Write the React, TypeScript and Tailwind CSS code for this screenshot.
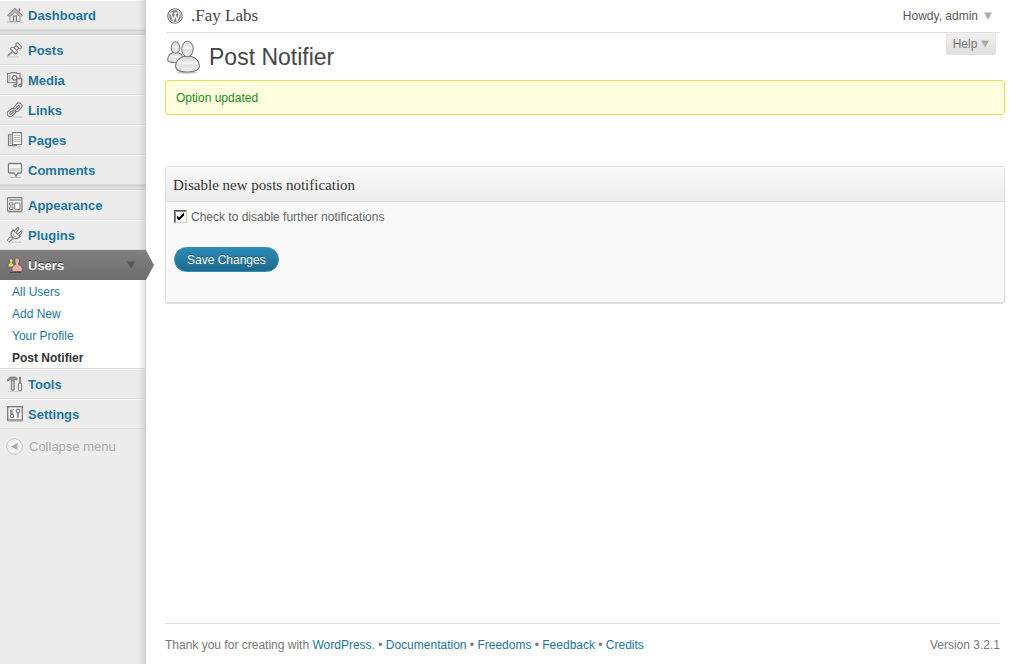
import type { ReactNode } from "react";

function Glyph({ children, className = "h-4 w-4" }: { children: ReactNode; className?: string }) {
  return (
    <svg viewBox="0 0 16 16" className={className} fill="none" stroke="#7c7c7c" strokeWidth="1.1" aria-hidden="true">
      {children}
    </svg>
  );
}

const icons: Record<string, ReactNode> = {
  Dashboard: (
    <Glyph>
      <path d="M.8 9 8 2.300l7.200 6.700" strokeWidth="2.200" stroke="#858585" />
      <path d="M1.500 8.800 8 2.800l6.500 6" strokeWidth=".7" stroke="#f5f5f5" />
      <path d="M12.500 1.500v3" strokeWidth="1.600" />
      <path d="M3 9.500v5h10v-5L8 4.800z" fill="#f2f2f2" stroke="#999" />
      <path d="M6.500 14.500V9h3v5.500" fill="#ddd" stroke="#777" />
      <path d="M0 15.200h16" stroke="#c4c4c4" strokeWidth="1" />
    </Glyph>
  ),
  Posts: (
    <Glyph>
      <path d="M9.300 1.200Q10.500.2 12 1.800l1.600 1.700q1.500 1.500.4 2.500-1 .8-2.200.3L9.700 8.200q1 2-.2 3.300-.8.700-1.700-.2L4 7.500q-.9-.9-.1-1.600 1.300-1.100 3.200-.2l2.100-2.200q-.6-1.300.1-2.300z" fill="#f5f5f5" />
      <path d="M9.200 3.500l2.700 2.800M6.800 5.700l3 2.800" />
      <path d="M5.500 9.500 1 13.800" strokeWidth="1.400" />
      <path d="M0 14.900h12" stroke="#c8c8c8" />
    </Glyph>
  ),
  Media: (
    <Glyph>
      <path d="M.6 2.500V1.500h3l.8-.9h4.800l.8.9h3v4M.6 2v8.500h9" fill="none" strokeWidth="1.200" />
      <path d="M2.800 3v6" stroke="#aaa" />
      <circle cx="7.500" cy="5.800" r="2.300" fill="#fff" strokeWidth="1.300" />
      <path d="M9.700 13V6.500h5V13" strokeWidth="1.400" />
      <ellipse cx="8.200" cy="13.500" rx="1.500" ry="1.400" fill="#ddd" />
      <ellipse cx="13.200" cy="13.500" rx="1.500" ry="1.400" fill="#ddd" />
    </Glyph>
  ),
  Links: (
    <Glyph>
      <g stroke="#777">
        <rect x="6.300" y="2.200" width="9" height="6" rx="3" transform="rotate(-47 10.800 5.200)" fill="#f4f4f4" />
        <rect x="8.800" y="4.300" width="4" height="1.800" rx=".9" transform="rotate(-47 10.800 5.200)" />
        <rect x="-.1" y="7.600" width="9" height="6" rx="3" transform="rotate(-42 4.400 10.600)" fill="#f4f4f4" />
        <rect x="2.400" y="9.700" width="4" height="1.800" rx=".9" transform="rotate(-42 4.400 10.600)" />
        <path d="M5.500 10 10.500 5.500" strokeWidth="2.200" />
        <path d="M5.800 9.700 10.200 5.800" strokeWidth=".8" stroke="#eee" />
      </g>
      <path d="M6 15h10" stroke="#c8c8c8" />
    </Glyph>
  ),
  Pages: (
    <Glyph>
      <path d="M4.500 2.500h-3v11h8v-1.500" fill="#e2e2e2" />
      <path d="M3.500 3v9" stroke="#aaa" />
      <path d="M5.500.600h9v11.900h-9z" fill="#fafafa" />
      <path d="M7 3.500h6M7 5.500h6M7 7.500h6M7 9.500h6" stroke="#b0b0b0" strokeWidth=".9" />
      <path d="M1 14.800h14" stroke="#d2d2d2" />
    </Glyph>
  ),
  Comments: (
    <Glyph>
      <path d="M2.500 1.500h11q1 0 1 1v7.500q0 1-1 1h-2.500L9 14l-2-3H2.500q-1 0-1-1V2.500q0-1 1-1z" fill="#f4f4f4" strokeWidth="1.300" />
      <path d="M3 6h10v3.500H3z" fill="#d6d6d6" stroke="none" />
      <path d="M3 15.300h11" stroke="#bbb" />
    </Glyph>
  ),
  Appearance: (
    <Glyph>
      <rect x=".6" y=".6" width="14.300" height="13.800" rx=".8" fill="#f2f2f2" strokeWidth="1.200" />
      <path d="M2 3h12" strokeWidth="1.500" stroke="#999" />
      <path d="M2.500 6h3.500v2H2.500zM2.500 10h3.500v2.500H2.500zM7.800 6h5.200v6.500H7.800z" fill="#fff" strokeWidth="1" />
      <path d="M0 15.500h16" stroke="#ccc" />
    </Glyph>
  ),
  Plugins: (
    <Glyph>
      <path d="M6.200 2.800 13 9.800q-2.800 2.400-5.300 1.800T4 8Q3.800 5 6.200 2.800z" fill="#f5f5f5" strokeWidth="1.200" />
      <path d="M7.200 4 10.500.8q1.400-.6 1.300 1L9.200 5.300M10.500 7.500 14 4q1.500-.2 1 1.300L12 8.800" fill="#f5f5f5" />
      <path d="M6 6.500q.5 3 3.500 3.500" stroke="#aaa" />
      <path d="M4.800 10Q2 9.800 1.500 12L.3 13.800M6.500 11.500Q4.500 12 3.800 13.500L1.800 15" />
      <path d="M4 15.200h10" stroke="#c8c8c8" />
    </Glyph>
  ),
  Users: (
    <Glyph>
      <path d="M4.200 1.500q2 0 1.800 2.400l-.8 2.300Q8 7 8 10H.700Q.300 7 3 6L2.400 3.900Q2.200 1.500 4.200 1.500z" fill="#dedb78" stroke="#5a5a45" strokeWidth=".8" />
      <path d="M10 .8q2.700 0 2.500 3.200l-1 3.500q4 1 4.100 5.300 0 1.700-2 1.700h-7q-2 0-2-1.700.1-4.300 4.100-5.300l-1-3.500Q7.300.8 10 .8z" fill="#e6b0ae" stroke="#6d4f4f" strokeWidth=".8" />
      <path d="M3 15.500h11" stroke="#4a4a4a" />
    </Glyph>
  ),
  Tools: (
    <Glyph>
      <path d="M.5 3.500Q2 1 4 1h4l2 1v2L8 3.500H7.200V14q-1.500 1-2.900 0V3.500H3L.5 5z" fill="#999" strokeWidth=".9" />
      <path d="M5.800 5v8.500" stroke="#ddd" />
      <path d="M13 .8v6.500" strokeWidth="1.800" />
      <rect x="11.400" y="7.300" width="3.200" height="7.200" rx="1.300" fill="#eee" />
      <path d="M1 15.300h14" stroke="#ccc" />
    </Glyph>
  ),
  Settings: (
    <Glyph>
      <rect x=".7" y=".7" width="14.600" height="13.300" fill="#f9f9f9" strokeWidth="1.400" />
      <path d="M3.700 3.500v5M6.300 3v1" strokeWidth="1" />
      <path d="M5 3.500v5" strokeWidth="1.300" />
      <circle cx="5" cy="10" r="1.700" fill="#fff" strokeWidth="1.200" />
      <circle cx="11" cy="5" r="1.800" fill="#fff" strokeWidth="1.300" />
      <path d="M11 7v4.800" strokeWidth="1.600" />
      <path d="M0 15.500h16" stroke="#c8c8c8" />
    </Glyph>
  ),
};

function MenuItem({ label }: { label: string }) {
  return (
    <li>
      <a
        href="#"
        className="flex h-[30px] items-center gap-[5px] border-t border-b border-t-[#f9f9f9] border-b-[#dfdfdf] pl-[7px] text-[13px] font-bold text-[#21759b]"
      >
        {icons[label]}
        <span className="pt-[2px]">{label}</span>
      </a>
    </li>
  );
}

function Separator() {
  return <li aria-hidden="true" className="h-[5px] border-t border-b border-[#cccccc] bg-[#dfdfdf]" />;
}

function Triangle({ className }: { className: string }) {
  return (
    <svg viewBox="0 0 8 8" className={className} aria-hidden="true">
      <path d="M0 .5h8L4 7.500z" fill="currentColor" />
    </svg>
  );
}

function Sidebar() {
  const submenu = ["All Users", "Add New", "Your Profile", "Post Notifier"];
  return (
    <nav aria-label="Main menu" className="relative w-[146px] shrink-0 border-r border-[#cccccc] bg-[#ececec]">
      <ul>
        <MenuItem label="Dashboard" />
        <Separator />
        {["Posts", "Media", "Links", "Pages", "Comments"].map((label) => (
          <MenuItem key={label} label={label} />
        ))}
        <Separator />
        <MenuItem label="Appearance" />
        <MenuItem label="Plugins" />
        <li>
          <a
            href="#"
            className="relative z-10 flex h-[30px] items-center gap-[5px] bg-linear-to-b from-[#808080] to-[#6d6d6d] pl-[7px] text-[13px] font-bold text-white"
          >
            {icons.Users}
            <span className="grow pt-[2px] [text-shadow:0_-1px_0_#333]">Users</span>
            <Triangle className="mr-[10px] h-2 w-2 text-[#555555]" />
            <span
              aria-hidden="true"
              className="absolute top-0 left-full h-[30px] w-[9px] bg-linear-to-b from-[#808080] to-[#6d6d6d] [clip-path:polygon(0_0,1px_0,100%_50%,1px_100%,0_100%)]"
            />
          </a>
          <ul className="border-b border-[#dfdfdf] bg-white">
            {submenu.map((label) => (
              <li key={label}>
                <a
                  href="#"
                  className={
                    label === "Post Notifier"
                      ? "flex h-[22px] items-center pt-[2px] pl-3 text-xs font-bold text-[#333333]"
                      : "flex h-[22px] items-center pt-[2px] pl-3 text-xs text-[#21759b]"
                  }
                >
                  {label}
                </a>
              </li>
            ))}
          </ul>
        </li>
        <MenuItem label="Tools" />
        <MenuItem label="Settings" />
      </ul>
      <button type="button" className="flex h-[35px] items-center gap-[6px] pl-[6px] text-[13px] text-[#aaaaaa]">
        <svg viewBox="0 0 17 17" className="h-[17px] w-[17px]" aria-hidden="true">
          <circle cx="8.500" cy="8.500" r="7.800" fill="#f3f3f3" stroke="#c6c6c6" />
          <path d="M11.500 5v7L5 8.500z" fill="#aaa" />
        </svg>
        Collapse menu
      </button>
      <div
        aria-hidden="true"
        className="pointer-events-none absolute inset-y-0 right-0 w-[7px] bg-linear-to-r from-transparent to-black/10"
      />
    </nav>
  );
}

function WordPressMark() {
  return (
    <svg viewBox="0 0 16 16" className="h-4 w-4" aria-hidden="true">
      <circle cx="8" cy="8" r="7.300" fill="#fff" stroke="#777" strokeWidth="1.100" />
      <circle cx="8" cy="8" r="5.900" fill="#858585" />
      <path
        d="M2.500 5.200h3.200M6.800 5.200h3.300M3.800 5.400l2.500 7 1.600-4.500M7.700 5.400l2.500 7 1.900-5.200q.3-1.700-.8-2.600-.5-.9.500-1.300"
        fill="none"
        stroke="#fff"
        strokeWidth="1.300"
      />
    </svg>
  );
}

function UsersArt() {
  return (
    <svg viewBox="0 0 34 34" className="h-[34px] w-[34px]" aria-hidden="true">
      <defs>
        <linearGradient id="body" x1="0" y1="0" x2="0" y2="1">
          <stop offset="0" stopColor="#d2d2d2" />
          <stop offset="0.450" stopColor="#f4f4f4" />
          <stop offset="0.550" stopColor="#dedede" />
          <stop offset="1" stopColor="#f3f3f3" />
        </linearGradient>
      </defs>
      <ellipse cx="21" cy="32.500" rx="10" ry="1.300" fill="#ccc" />
      <g fill="url(#body)" stroke="#7b7b7b" strokeWidth="1.100">
        <path d="M1.500 20q.3-5 5.500-7.500h5q5 2 5.500 7 0 3-7.500 3T1.500 20z" />
        <ellipse cx="9.500" cy="7.500" rx="4.300" ry="5.700" />
        <path d="M9.500 26q.5-6.500 7.500-9.500h9q7 3 7.500 9.500 0 6-12 6T9.500 26z" />
        <ellipse cx="21.500" cy="9" rx="5.700" ry="7.800" />
      </g>
    </svg>
  );
}

function Footer() {
  const links = ["Documentation", "Freedoms", "Feedback", "Credits"];
  return (
    <footer className="mt-auto mr-[5px] flex h-[41px] items-center justify-between border-t border-[#dfdfdf] pt-[2px] text-xs text-[#777777]">
      <p>
        Thank you for creating with{" "}
        <a href="#" className="text-[#21759b]">
          WordPress
        </a>
        .
        {links.map((label) => (
          <span key={label}>
            {" • "}
            <a href="#" className="text-[#21759b]">
              {label}
            </a>
          </span>
        ))}
      </p>
      <p>Version 3.2.1</p>
    </footer>
  );
}

export default function App() {
  return (
    <div className="flex min-h-screen bg-white font-['Liberation_Sans',Arial,sans-serif] text-xs text-[#333333]">
      <Sidebar />
      <main className="flex min-w-0 grow flex-col pr-[15px] pl-[19px]">
        <header className="mr-[5px] ml-px flex h-[33px] items-center justify-between border-b border-[#dfdfdf]">
          <a href="#" className="flex items-center gap-2 pl-px font-['Liberation_Serif',serif] text-[17px] text-[#464646]">
            <WordPressMark />
            .Fay Labs
          </a>
          <button type="button" className="flex items-center gap-[6px] pr-2 text-[#555555]">
            Howdy, admin
            <Triangle className="h-2 w-2 text-[#aaaaaa]" />
          </button>
        </header>
        <div className="ml-px flex h-[47px] items-start justify-between pr-[9px]">
          <div className="flex items-center gap-[9px] pt-[7px]">
            <UsersArt />
            <h1 className="text-[23px] leading-[34px] text-[#464646]">Post Notifier</h1>
          </div>
          <button
            type="button"
            className="flex h-[22px] w-[50px] items-center justify-center gap-1 rounded-b-[3px] bg-linear-to-b from-[#efefef] to-[#dfdfdf] text-[#777777]"
          >
            Help
            <Triangle className="h-2 w-2 text-[#aaaaaa]" />
          </button>
        </div>
        <p
          role="status"
          className="flex h-[35px] items-center rounded-[3px] border border-[#e6db55] bg-[#ffffe0] px-[10px] text-[#228b22]"
        >
          Option updated
        </p>
        <section className="mt-[51px] rounded-[3px] border border-b-2 border-[#dfdfdf] bg-[#f9f9f9] pb-[30px]">
          <h2 className="flex h-[35px] items-center border-b border-[#dfdfdf] bg-linear-to-b from-[#f9f9f9] to-[#ececec] px-[7px] pt-[3px] font-['Liberation_Serif',serif] text-[15px] text-[#333333]">
            Disable new posts notification
          </h2>
          <form className="px-2" onSubmit={(event) => event.preventDefault()}>
            <label className="flex h-[29px] w-fit items-center gap-1 text-[#666666]">
              <span className="grid h-[13px] w-[13px]">
                <input
                  type="checkbox"
                  defaultChecked
                  className="peer col-start-1 row-start-1 h-[13px] w-[13px] appearance-none border border-t-[#555555] border-r-[#cccccc] border-b-[#cccccc] border-l-[#555555] bg-white shadow-[inset_1px_1px_0_#888]"
                />
                <svg
                  viewBox="0 0 13 13"
                  className="pointer-events-none invisible col-start-1 row-start-1 h-[13px] w-[13px] peer-checked:visible"
                  aria-hidden="true"
                >
                  <path d="M3 5.500v3l2 2 5-5v-3l-5 5z" fill="#000" />
                </svg>
              </span>
              Check to disable further notifications
            </label>
            <button
              type="submit"
              className="mt-4 flex h-[25px] items-center rounded-full border border-[#298cba] bg-linear-to-b from-[#298cba] to-[#21698b] px-3 text-xs text-white [text-shadow:0_-1px_0_rgb(0_0_0/0.3)]"
            >
              Save Changes
            </button>
          </form>
        </section>
        <Footer />
      </main>
    </div>
  );
}
